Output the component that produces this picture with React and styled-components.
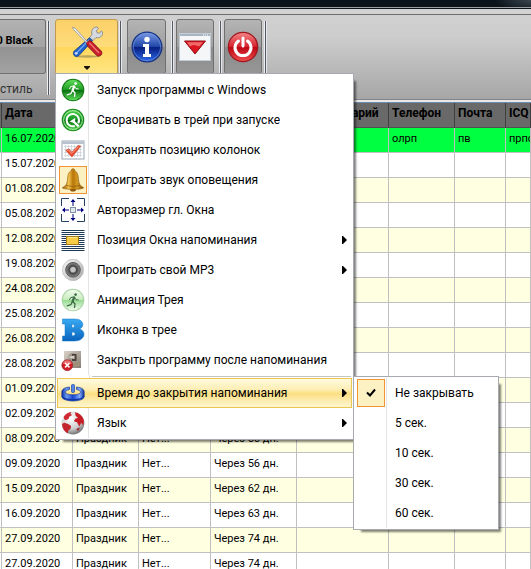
import React from "react";
import styled, { createGlobalStyle, css } from "styled-components";

const GlobalStyle = createGlobalStyle`
  * { box-sizing: border-box; }
  html, body { height: 100%; }
  body {
    margin: 0;
    overflow: hidden;
    background: #fff;
    color: #000;
    font-family: Roboto, "Noto Sans", sans-serif;
    font-size: 12px;
  }
  button { font: inherit; color: inherit; }
  svg { display: block; }
`;

/* ---------- window frame and ribbon ---------- */

const TitleBar = styled.div`
  height: 9px;
  background: radial-gradient(ellipse 36px 12px at 100% 0, #3c464e, transparent), #0b141b;
  border-bottom: 1px solid #0b141b;
  box-shadow: inset 0 -1px 0 #9a9ea1;
`;

const Frame = styled.div`
  height: 6px;
  background: #d2d2d2;
  border-bottom: 1px solid #6c6c6c;
`;

const Ribbon = styled.header`
  position: relative;
  z-index: 2;
  display: flex;
  align-items: flex-start;
  height: 84px;
  padding-top: 4px;
  background: linear-gradient(#d0d0d0 0, #cdcdcd 26%, #a6a6a6 100%);
`;

const RibbonEdge = styled.div`
  height: 4px;
  border-top: 1px solid #858585;
  border-bottom: 1px solid #6a8cae;
  background: #e8e8e8;
`;

const StyleGroup = styled.div`
  width: 46px;
`;

const GroupLabel = styled.div`
  padding-right: 17px;
  text-align: right;
  line-height: 30px;
  color: #333;
`;

const Divider = styled.span`
  flex: none;
  width: 3px;
  height: 74px;
  margin: 2px ${(p) => p.$after}px 0 ${(p) => p.$before}px;
  background: linear-gradient(90deg, #eceef2 33%, #54585e 33% 67%, #e4e7ee 67%);
`;

const RibbonButton = styled.button`
  display: flex;
  align-items: center;
  justify-content: center;
  width: ${(p) => p.$width}px;
  height: 55px;
  padding: 0;
  border: 1px solid #6f6f6f;
  border-radius: 3px;
  background: linear-gradient(#b4b4b4 0, #a0a0a0 50%, #8b8b8b 51%, #969696 100%);
  ${(p) => p.$active && css`
    flex-direction: column;
    justify-content: flex-start;
    gap: 7px;
    padding-top: 5px;
    border-color: #c09a4c;
    border-bottom-left-radius: 0;
    border-bottom-right-radius: 0;
    background: linear-gradient(#fbd069 0, #fddc79 50%, #ffd75c 51%, #ffe583 100%);
  `}
`;

const StyleButton = styled(RibbonButton)`
  justify-content: flex-end;
  padding: 0 12px 13px 0;
  border-left: 0;
  border-top-left-radius: 0;
  border-bottom-left-radius: 0;
  font-size: 11px;
  font-weight: 700;
  white-space: nowrap;
  background: linear-gradient(#b2b2b2 0, #a4a4a4 50%, #939393 51%, #a2a2a2 100%);
`;

const MenuAnchor = styled.div`
  position: relative;
`;

/* ---------- menus ---------- */

const Menu = styled.ul`
  position: absolute;
  z-index: 5;
  margin: 0;
  padding: 1px;
  list-style: none;
  background: #fff;
  border: 1px solid #a7abb0;
  box-shadow: 5px 5px 2px -3px rgba(0, 0, 0, 0.5);
`;

const MainMenu = styled(Menu)`
  top: 54px;
  left: 0;
  width: 299px;
`;

const SubMenu = styled(Menu)`
  top: -2px;
  left: 296px;
  width: 146px;
`;

const MenuEntry = styled.li`
  position: relative;
`;

const Gutter = styled.span`
  flex: none;
  display: flex;
  align-items: center;
  width: 32px;
  height: 30px;
  padding-left: 2px;
  border-right: 1px solid #e2e3e3;
`;

const IconBox = styled.span`
  display: flex;
  align-items: center;
  justify-content: center;
  width: 28px;
  height: 28px;
  border: 1px solid ${(p) => (p.$checked ? "#f29436" : "transparent")};
  background: ${(p) => (p.$checked ? "#fcf1c2" : "transparent")};
`;

const MenuButton = styled.button`
  display: flex;
  align-items: center;
  width: 100%;
  height: 30px;
  padding: 0 5px 0 0;
  border: 0;
  background: none;
  text-align: left;
  white-space: nowrap;
  ${(p) => p.$hot && css`
    background: linear-gradient(#fffbe4 0, #fdeeb4 38%, #fcdf83 52%, #fdeeb6 80%, #fff7d2 100%);
    box-shadow: inset 0 0 0 1px #ecc653;
    ${Gutter} { border-color: transparent; }
  `}
`;

const MenuText = styled.span`
  flex: 1;
  padding-left: 8px;
`;

const MenuRule = styled.li`
  display: flex;
  height: 3px;
  &::before {
    content: "";
    width: 32px;
    border-right: 1px solid #e2e3e3;
  }
  &::after {
    content: "";
    flex: 1;
    height: 1px;
    margin: 1px 1px 0 2px;
    background: #c5c5c5;
  }
`;

/* ---------- table ---------- */

const Grid = styled.table`
  width: 100%;
  table-layout: fixed;
  border-collapse: separate;
  border-spacing: 0;
`;

const HeadCell = styled.th`
  height: 25px;
  padding: 0 3px 5px 3px;
  overflow: hidden;
  border-right: 1px solid #3f3f3f;
  border-bottom: 1px solid #505050;
  background: #696969;
  text-align: left;
  white-space: nowrap;
  font-size: 12px;
  line-height: 16px;
`;

const rowColors = { green: "#00ff40", white: "#fff", cream: "#ffffe1" };

const Row = styled.tr`
  background: ${(p) => rowColors[p.$tone]};
`;

const Cell = styled.td`
  height: 25px;
  padding: 0 0 2px 3px;
  overflow: hidden;
  border-right: 1px solid #c0c0c0;
  border-bottom: 1px solid #c0c0c0;
  white-space: nowrap;
  font-size: 11px;
  line-height: 16px;
`;

/* ---------- drawings ---------- */

const Ball = ({ id, light, mid, dark, rim }) => (
  <>
    <defs>
      <linearGradient id={id} x1="0" y1="0" x2="0" y2="1">
        <stop offset="0" stopColor={light} />
        <stop offset=".48" stopColor={mid} />
        <stop offset=".52" stopColor={dark} />
        <stop offset="1" stopColor={light} />
      </linearGradient>
    </defs>
    <circle cx="12" cy="12" r="11.3" fill={rim} />
    <circle cx="12" cy="12" r="10.3" fill={`url(#${id})`} />
  </>
);

const Runner = ({ color }) => (
  <g fill="none" stroke={color} strokeLinecap="round" strokeLinejoin="round">
    <circle cx="14.6" cy="5.6" r="1.3" fill={color} stroke="none" />
    <path d="M13.2 8.4l-1.6 3.8" strokeWidth="2.2" />
    <path d="M13.6 8.400l1.400 2.300 2.200.2M12.600 8L9.700 8.600 8.600 10.700" strokeWidth="1" />
    <path d="M12 12.800l2 2.200-.5 3.400M11.300 12.800l-1.500 2.900-3.500 1.200" strokeWidth="1.300" />
  </g>
);

const RunIcon = () => (
  <svg width="24" height="24" viewBox="0 0 24 24">
    <Ball id="run" light="#5fe05a" mid="#1f9a23" dark="#087011" rim="#137818" />
    <Runner color="#fff" />
  </svg>
);

const TrayIcon = () => (
  <svg width="24" height="24" viewBox="0 0 24 24">
    <Ball id="tray" light="#4fd64a" mid="#159526" dark="#066e10" rim="#1b8a20" />
    <circle cx="12" cy="12" r="9.4" fill="none" stroke="#b8eeb4" strokeWidth=".9" />
    <path d="M17.200 15.200A6.200 6.200 0 1 0 13.800 18" fill="none" stroke="#fff" strokeWidth="2" />
    <path d="M8.500 13.600l5.700-3.500-.1 3.400 4.400 4.100-1.700 1.600-4.200-4.300z" fill="#fff" />
  </svg>
);

const CalendarIcon = () => (
  <svg width="24" height="24" viewBox="0 0 24 24">
    <rect x="1" y="3" width="22" height="18" fill="#fff" stroke="#9aa5b3" />
    <path d="M1.500 4.800h21" stroke="#b8c1ce" strokeWidth="2.400" />
    <path d="M3 8.500h18M3 11.500h18M3 14.500h18M3 17.500h18M4.500 7v12M7.500 7v12M10.500 7v12M13.500 7v12M16.500 7v12M19.500 7v12" stroke="#cfd2d8" strokeWidth=".8" />
    <path d="M4.800 12.400l3.200-1.600 2.700 3.400 6.700-7 2.300 1L11 19z" fill="#ea4a31" stroke="#c5472f" strokeWidth=".6" />
    <path d="M6.300 12.400l1.300-.5 3 3.800 7-7.100" fill="none" stroke="#ff9c84" />
  </svg>
);

const BellIcon = () => (
  <svg width="24" height="24" viewBox="0 0 24 24">
    <defs>
      <linearGradient id="bell">
        <stop offset="0" stopColor="#8e5404" />
        <stop offset=".3" stopColor="#f2c450" />
        <stop offset=".5" stopColor="#b87508" />
        <stop offset=".7" stopColor="#d49a26" />
        <stop offset="1" stopColor="#7a4302" />
      </linearGradient>
    </defs>
    <ellipse cx="12" cy="21.800" rx="3" ry="1.800" fill="#8a5406" />
    <path d="M10.300 2.800C9.700 0 14.300 0 13.700 2.800c3.300 1.400 3.500 5 3.800 9 .4 4 1.700 6.200 5.200 8-2.500 2.200-18.900 2.200-21.400 0 3.500-1.800 4.800-4 5.200-8 .3-4 .5-7.600 3.800-9z" fill="url(#bell)" stroke="#925a09" strokeWidth=".6" />
    <path d="M5 17.500q7 1.800 14 0" fill="none" stroke="#8d5a08" strokeWidth=".7" />
  </svg>
);

const ResizeIcon = () => (
  <svg width="24" height="24" viewBox="0 0 24 24">
    <path d="M8 .5H.5V8M16 .5h7.500V8M8 23.500H.5V16M16 23.500h7.500V16" fill="none" stroke="#24405f" />
    <path d="M12 2v6M12 16v6M2 12h6M16 12h6" stroke="#000080" />
    <path d="M12 1l2.500 3h-5zM12 23l2.500-3h-5zM1 12l3-2.500v5zM23 12l-3-2.500v5z" fill="#000080" />
    <rect x="9.500" y="9.500" width="5" height="5" fill="#dfe6ee" stroke="#8493a4" />
  </svg>
);

const PositionIcon = () => (
  <svg width="24" height="24" viewBox="0 0 24 24">
    <path d="M.5 2.500h23M.5 4.500h23M.5 6.500h23M.5 8.500h23M.5 10.500h23M.5 12.500h23M.5 14.500h23M.5 16.500h23M.5 18.500h23M.5 20.500h23M.5 22.500h23" stroke="#1e3a55" />
    <rect x="5.500" y="8.500" width="12" height="8" fill="#f8cd45" stroke="#a77b13" />
    <path d="M7 9.500h9" stroke="#ffe98e" />
  </svg>
);

const SpeakerIcon = () => (
  <svg width="24" height="24" viewBox="0 0 24 24">
    <defs>
      <linearGradient id="spk" x1="0" y1="0" x2="1" y2="1">
        <stop offset="0" stopColor="#fafafa" />
        <stop offset="1" stopColor="#a8a8a8" />
      </linearGradient>
      <radialGradient id="cone">
        <stop offset="0" stopColor="#dcdcdc" />
        <stop offset=".3" stopColor="#aaa" />
        <stop offset=".5" stopColor="#444" />
        <stop offset="1" stopColor="#8f8f8f" />
      </radialGradient>
    </defs>
    <path d="M6 3L8 .9h8L18 3l4.600 5v8L18 20.500l-3 2.600H9L6 20.500 1.400 16V8z" fill="#dedede" />
    <circle cx="12" cy="12" r="10.500" fill="url(#spk)" stroke="#b4b4b4" strokeWidth=".5" />
    <circle cx="12" cy="11.800" r="7.300" fill="url(#cone)" stroke="#555" />
    <circle cx="12" cy="11.500" r="2.500" fill="#c5c5c5" />
  </svg>
);

const AnimationIcon = () => (
  <svg width="24" height="24" viewBox="0 0 24 24">
    <Ball id="anim" light="#f1fbed" mid="#c8ebbe" dark="#97dc92" rim="#a9d3a3" />
    <g transform="translate(0 1)"><Runner color="#3d6b46" /></g>
  </svg>
);

const LetterIcon = () => (
  <svg width="24" height="24" viewBox="0 0 24 24">
    <defs>
      <linearGradient id="bee" x1="0" y1="0" x2="0" y2="1">
        <stop offset="0" stopColor="#39aaf3" />
        <stop offset="1" stopColor="#0863bc" />
      </linearGradient>
    </defs>
    <path fillRule="evenodd" d="M1.500 1H14c9.500 0 9.500 8.500 4.400 10 7.500 2 5.800 12-4.900 12h-12v-5H4V6H1.500zM11 6.300v3.400c3 .2 3.400-3.400 0-3.400zM11 14v3.800c4 .2 4-3.900 0-3.800z" fill="url(#bee)" stroke="#1676c7" strokeWidth=".5" />
  </svg>
);

const CloseAppIcon = () => (
  <svg width="24" height="24" viewBox="0 0 24 24">
    <defs>
      <linearGradient id="plate" x1="0" y1="0" x2="1" y2="1">
        <stop offset="0" stopColor="#dbd4c8" />
        <stop offset="1" stopColor="#847b70" />
      </linearGradient>
    </defs>
    <rect x="3" y="3" width="17" height="17" fill="url(#plate)" />
    <circle cx="12" cy="9.500" r="4.500" fill="#9b948a" />
    <path d="M11 6h4.500v7H11z" fill="#4a433d" />
    <path d="M8.500 8.500l5-1v3.500l-5-1z" fill="#d8d2c6" />
    <path d="M13 14h6v4h-6z" fill="#9f8e77" />
    <circle cx="6.300" cy="17.200" r="5.500" fill="#cf1d26" stroke="#942129" strokeWidth=".6" />
    <path d="M1.700 15.400a4.900 4.900 0 0 1 9.200 0q-4.600 2.300-9.200 0z" fill="#e86a6a" />
    <path d="M4.100 15l4.400 4.400M8.500 15l-4.400 4.400" stroke="#fff" strokeWidth="1.500" />
  </svg>
);

const TimerIcon = () => (
  <svg width="24" height="24" viewBox="0 0 24 24">
    <defs>
      <linearGradient id="ring">
        <stop offset="0" stopColor="#0d2fa0" />
        <stop offset=".22" stopColor="#6d9cf3" />
        <stop offset=".5" stopColor="#1644cc" />
        <stop offset=".8" stopColor="#82adff" />
        <stop offset="1" stopColor="#0e2d90" />
      </linearGradient>
    </defs>
    <path fillRule="evenodd" d="M8.500 6C3 6.500 .8 8.500 .8 11v4.500c0 6 22.400 6 22.400 0V11c0-2.500-2.200-4.500-7.700-5v2.500c6 1.200 5.500 5.300-3.500 5.300S2.500 9.700 8.500 8.500z" fill="url(#ring)" stroke="#0b2a8a" strokeWidth=".6" />
    <path d="M1 15c2 5 20 5 22 0" fill="none" stroke="#1237a7" strokeWidth="1.400" />
    <rect x="10.500" y="3.500" width="3" height="8" rx="1" fill="#5486eb" stroke="#1c439f" strokeWidth=".7" />
  </svg>
);

const GlobeIcon = () => (
  <svg width="24" height="24" viewBox="0 0 24 24">
    <defs>
      <radialGradient id="globe" cx=".4" cy=".3" r=".75">
        <stop offset="0" stopColor="#fff" />
        <stop offset=".6" stopColor="#cfcfcf" />
        <stop offset="1" stopColor="#666" />
      </radialGradient>
    </defs>
    <circle cx="12" cy="12" r="11.400" fill="url(#globe)" />
    <path d="M2.800 5.400C4.800 2.700 7.600 1.200 10.500.9L9.500 3l1.700 1-3 1.700-.7 2.300-3 1.300-1.400-1.300z" fill="#cf2a31" />
    <path d="M1 13l2.400-1.200 3.700 1.200 3 2-.5 2.700-2.400 2-.3 2.800C3.500 20.800 1.200 17.500 1 13z" fill="#c4242b" />
    <path d="M14 1.300c4.600.8 8 4.200 8.900 8.700l-.6 4.500-2-2.700-2 3.700-2.300-4.200-3.200-1 1.700-2.800 2.600-.6-2.500-2.200z" fill="#c91d26" />
    <path d="M15.500 18l3.500-1.500-2 3.500z" fill="#9e151c" />
  </svg>
);

const ToolsIcon = () => (
  <svg width="32" height="34" viewBox="0 0 32 34">
    <ellipse cx="16" cy="31.500" rx="13" ry="1.200" fill="#8b7c4e" opacity=".6" />
    <path d="M18.500 12.500l2.500-3c-1.300-4 1-7.600 5-7.500l1.500 1.500-2.200 2.300.9 2 2.200.5 2-2.400 1.200 1.100c.5 4-3 6.700-6.600 5.500l-3 3z" fill="#d6dade" stroke="#777f88" strokeWidth=".8" />
    <path d="M18.500 12.800l3 3L8 30.500c-3.500 2.600-7-.6-5-4.200z" fill="#2262c8" stroke="#133c85" strokeWidth=".8" />
    <path d="M18 15L5.500 28" stroke="#70a9f6" strokeWidth="1.200" />
    <path d="M1.500 2.200l2.500.8L17 17.500 16 18.500 2.500 4.500z" fill="#eef0f1" stroke="#858b91" strokeWidth=".7" />
    <path d="M15.500 18l2.500-2.500 2.500.8 9.700 9.700c2.300 3.300-1.500 6.500-4.500 4.500l-9.300-9.500z" fill="#c91f29" stroke="#7a1319" strokeWidth=".8" />
    <path d="M18.500 18l9.500 10" stroke="#f47b7b" strokeWidth="1.200" />
    <circle cx="5.200" cy="28.300" r="1.400" fill="#c5daf7" />
  </svg>
);

const DropIcon = () => (
  <svg width="6" height="4" viewBox="0 0 6 4">
    <path d="M0 0h6v1L3 4 0 1z" fill="#15130c" />
  </svg>
);

const InfoIcon = () => (
  <svg width="32" height="32" viewBox="0 0 32 32">
    <defs>
      <linearGradient id="info" x1="0" y1="0" x2="0" y2="1">
        <stop offset="0" stopColor="#7b98e6" />
        <stop offset=".48" stopColor="#2149a9" />
        <stop offset=".52" stopColor="#071f80" />
        <stop offset="1" stopColor="#2d6bed" />
      </linearGradient>
    </defs>
    <circle cx="16" cy="16" r="14.900" fill="url(#info)" stroke="#173381" strokeWidth="1.200" />
    <circle cx="16" cy="16" r="13.700" fill="none" stroke="#7999dc" strokeWidth=".6" />
    <circle cx="16" cy="8.500" r="2.700" fill="#fff" />
    <path d="M12 13h6v10h2v3h-8v-3h2v-7h-2z" fill="#fff" />
  </svg>
);

const MinimizeIcon = () => (
  <svg width="32" height="28" viewBox="0 0 32 28">
    <rect x=".5" y=".5" width="31" height="27" fill="#f5f6f8" stroke="#c2ccd7" />
    <path d="M1 2h30" stroke="#a8b5c3" strokeWidth="2" />
    <path d="M24 2h1M26 2h1M28 2h1" stroke="#fff" />
    <path d="M5.500 8h21L16 21z" fill="#dc1620" stroke="#8f1115" strokeLinejoin="round" />
    <path d="M8 9.200h16L20 13.500q-6-3-9 0z" fill="#f16a6a" />
  </svg>
);

const PowerIcon = () => (
  <svg width="32" height="32" viewBox="0 0 32 32">
    <defs>
      <linearGradient id="power" x1="0" y1="0" x2="0" y2="1">
        <stop offset="0" stopColor="#f48787" />
        <stop offset=".48" stopColor="#d72531" />
        <stop offset=".52" stopColor="#bd0713" />
        <stop offset="1" stopColor="#ef4f4f" />
      </linearGradient>
    </defs>
    <circle cx="16" cy="16" r="14.700" fill="url(#power)" stroke="#9e1820" strokeWidth="1.200" />
    <path d="M11.500 10a8 8 0 1 0 9 0" fill="none" stroke="#fff" strokeWidth="3" strokeLinecap="round" />
    <path d="M16 7v8" stroke="#fff" strokeWidth="3" strokeLinecap="round" />
  </svg>
);

const ArrowIcon = () => (
  <svg width="5" height="8" viewBox="0 0 5 8">
    <path d="M0 0h1l4 4-4 4H0z" fill="#000" />
  </svg>
);

const CheckIcon = () => (
  <svg width="10" height="10" viewBox="0 0 10 10">
    <path d="M1 4.500L4 7.500 9 1.500" fill="none" stroke="#000" strokeWidth="2" />
  </svg>
);

/* ---------- data ---------- */

const menuItems = [
  { text: "Запуск программы с Windows", Icon: RunIcon },
  { text: "Сворачивать в трей при запуске", Icon: TrayIcon },
  { text: "Сохранять позицию колонок", Icon: CalendarIcon },
  { text: "Проиграть звук оповещения", Icon: BellIcon, checked: true },
  { text: "Авторазмер гл. Окна", Icon: ResizeIcon },
  { text: "Позиция Окна напоминания", Icon: PositionIcon, more: true },
  { text: "Проиграть свой MP3", Icon: SpeakerIcon, more: true },
  { text: "Анимация Трея", Icon: AnimationIcon },
  { text: "Иконка в трее", Icon: LetterIcon },
  { text: "Закрыть программу после напоминания", Icon: CloseAppIcon },
  { rule: true },
  {
    text: "Время до закрытия напоминания",
    Icon: TimerIcon,
    more: true,
    hot: true,
    children: [
      { text: "Не закрывать", Icon: CheckIcon, checked: true },
      { text: "5 сек." },
      { text: "10 сек." },
      { text: "30 сек." },
      { text: "60 сек." },
    ],
  },
  { text: "Язык", Icon: GlobeIcon, more: true },
];

const columns = [
  { title: "", width: 2 },
  { title: "Дата", width: 71 },
  { title: "", width: 66 },
  { title: "", width: 72 },
  { title: "", width: 86 },
  { title: "Комментарий", width: 92 },
  { title: "Телефон", width: 66 },
  { title: "Почта", width: 51 },
  { title: "ICQ" },
];

const holiday = (date, left) => [date, "Праздник", "Нет...", left];

const rows = [
  ["16.07.2020", "", "", "", "", "олрп", "пв", "прпо"],
  ["15.07.2020"],
  ["01.08.2020"],
  ["05.08.2020"],
  ["12.08.2020"],
  ["19.08.2020"],
  ["24.08.2020"],
  ["25.08.2020"],
  ["26.08.2020"],
  ["28.08.2020"],
  ["01.09.2020"],
  ["02.09.2020"],
  holiday("08.09.2020", "Через 55 дн."),
  holiday("09.09.2020", "Через 56 дн."),
  holiday("15.09.2020", "Через 62 дн."),
  holiday("16.09.2020", "Через 63 дн."),
  holiday("27.09.2020", "Через 74 дн."),
  holiday("27.09.2020", "Через 74 дн."),
];

const toneOf = (index) => (index === 0 ? "green" : index % 2 ? "white" : "cream");

function MenuItem({ item }) {
  if (item.rule) return <MenuRule role="separator" />;
  const { text, Icon, checked, more, hot, children } = item;
  return (
    <MenuEntry role="none">
      <MenuButton type="button" role="menuitem" $hot={hot}>
        <Gutter>
          <IconBox $checked={checked}>{Icon && <Icon />}</IconBox>
        </Gutter>
        <MenuText>{text}</MenuText>
        {more && <ArrowIcon />}
      </MenuButton>
      {children && (
        <SubMenu role="menu">
          {children.map((child) => <MenuItem key={child.text} item={child} />)}
        </SubMenu>
      )}
    </MenuEntry>
  );
}

export default function App() {
  return (
    <>
      <GlobalStyle />
      <TitleBar />
      <Frame />
      <Ribbon>
        <StyleGroup>
          <StyleButton type="button" $width={46}>0 Black</StyleButton>
          <GroupLabel>стиль</GroupLabel>
        </StyleGroup>
        <Divider $before={1} $after={5} />
        <MenuAnchor>
          <RibbonButton type="button" $width={63} $active aria-haspopup="menu" aria-expanded="true">
            <ToolsIcon />
            <DropIcon />
          </RibbonButton>
          <MainMenu role="menu">
            {menuItems.map((item, i) => <MenuItem key={i} item={item} />)}
          </MainMenu>
        </MenuAnchor>
        <Divider $before={1} $after={5} />
        <RibbonButton type="button" $width={39}><InfoIcon /></RibbonButton>
        <Divider $before={5} $after={2} />
        <RibbonButton type="button" $width={38}><MinimizeIcon /></RibbonButton>
        <Divider $before={5} $after={2} />
        <RibbonButton type="button" $width={38}><PowerIcon /></RibbonButton>
        <Divider $before={2} $after={0} />
      </Ribbon>
      <RibbonEdge />
      <Grid>
        <colgroup>
          {columns.map((c, i) => <col key={i} width={c.width} />)}
        </colgroup>
        <thead>
          <tr>
            {columns.map((c, i) => <HeadCell key={i} scope="col">{c.title}</HeadCell>)}
          </tr>
        </thead>
        <tbody>
          {rows.map((row, r) => (
            <Row key={r} $tone={toneOf(r)}>
              <Cell />
              {columns.slice(1).map((c, i) => <Cell key={i}>{row[i]}</Cell>)}
            </Row>
          ))}
        </tbody>
      </Grid>
    </>
  );
}
